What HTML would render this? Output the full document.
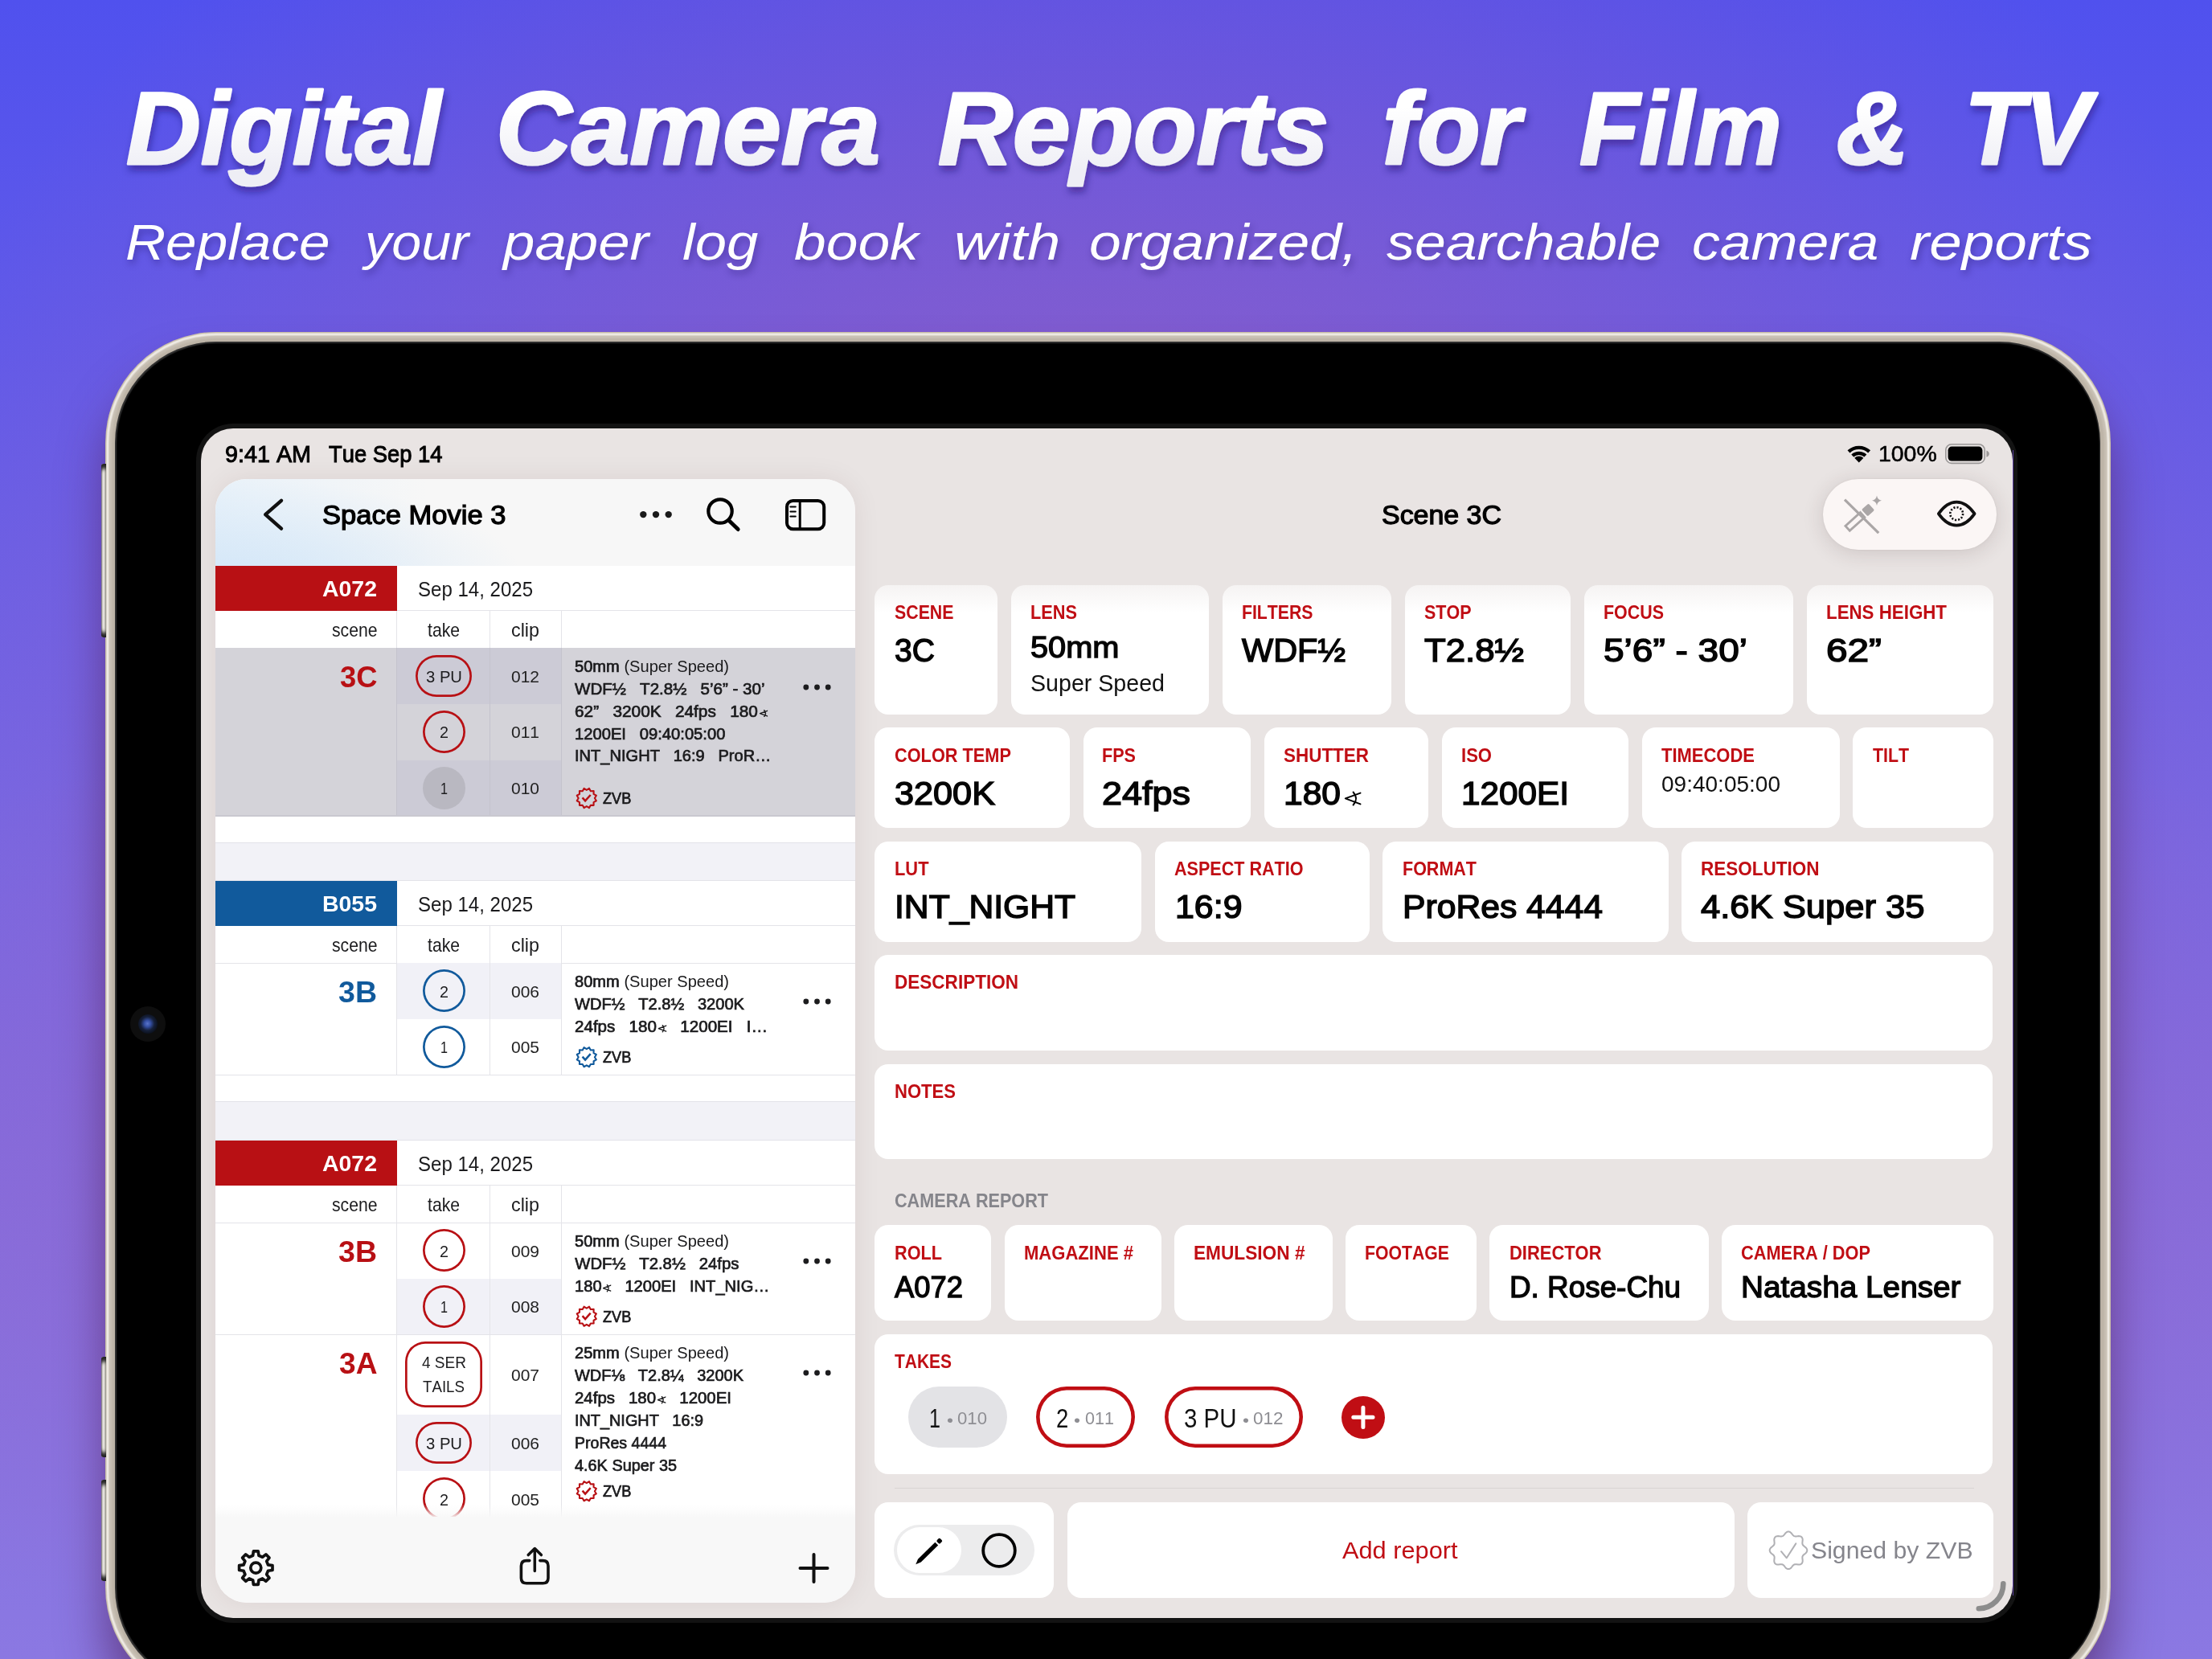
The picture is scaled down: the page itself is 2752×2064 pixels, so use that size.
<!DOCTYPE html>
<html><head><meta charset="utf-8"><title>Digital Camera Reports</title>
<style>
html,body{margin:0;padding:0}
body{width:2752px;height:2064px;overflow:hidden;position:relative;font-family:"Liberation Sans",sans-serif;font-kerning:none;
background:radial-gradient(ellipse 1500px 1150px at 50% 35%,rgba(165,95,180,.62) 0%,rgba(165,95,180,0) 100%),radial-gradient(ellipse 2200px 640px at 50% 72%,rgba(172,92,176,.45) 0%,rgba(172,92,176,0) 100%),linear-gradient(180deg,#5051EE 0%,#7866E1 49%,#8B78E2 100%);}
div,span,svg{position:absolute}
.t{display:block;white-space:pre;line-height:1;transform-origin:0 0}
.t i{font-style:normal;font-weight:400;-webkit-text-stroke:0}
.ang{position:static;display:inline-block;width:.53em;height:.455em;vertical-align:-.03em;margin-left:.07em}
.ttl{background:linear-gradient(180deg,#fff 30%,#ececf4 78%);-webkit-background-clip:text;background-clip:text;color:transparent;-webkit-text-fill-color:transparent;padding:0 .12em .25em .05em;margin:0 0 0 -.05em;filter:drop-shadow(2px 7px 7px rgba(25,15,90,.38))}
.sub{text-shadow:2px 5px 8px rgba(25,15,90,.35)}
.ov{left:0;top:0;pointer-events:none}
.tx{left:0;top:0;width:2752px;height:2064px;will-change:transform}
.dev{left:131px;top:413px;width:2494.5px;height:1700px;border-radius:138px;background:#c9bea8;box-shadow:0 46px 56px rgba(78,32,92,.62)}
.dev .a{left:.9px;top:.9px;right:.9px;bottom:.9px;border-radius:137px;background:#d9d3c8}
.dev .h{left:2px;top:2px;right:2px;bottom:2px;border-radius:136px;background:#f1ede7;filter:blur(.7px)}
.dev .b{left:4.6px;top:4.6px;right:4.6px;bottom:4.6px;border-radius:133.4px;background:#c9c1b5;box-shadow:0 0 1.5px 1px #d4cdc2}
.dev .b2{left:8px;top:8px;right:8px;bottom:8px;border-radius:130px;background:#bdb4a7;filter:blur(1.2px)}
.dev .c{left:12.3px;top:12.3px;right:12.3px;bottom:12.3px;border-radius:125.7px;background:#343434}
.dev .d{left:14.6px;top:14.6px;right:14.6px;bottom:14.6px;border-radius:123.4px;background:#000;box-shadow:0 0 1.6px 1px #000}
.btn{left:125.8px;width:6.4px;border-radius:3px 0 0 3px;background:linear-gradient(90deg,#8e8a84 0,#f0eeea 35%,#d8d4cd 70%,#a9a49b 100%);box-shadow:inset 0 9px 5px -3px #222,inset 0 -9px 5px -3px #222}
.ring{left:243.8px;top:526.8px;width:2266.4px;height:1492.4px;border-radius:46px;background:#131313}
.scr{left:249.6px;top:532.6px;width:2254.8px;height:1480.8px;border-radius:40px;background:#e9e4e3;overflow:hidden}
.sb{left:267.5px;top:596.2px;width:796.7px;height:1398px;border-radius:39px;overflow:hidden;background:#f7f7f8;box-shadow:0 0 34px rgba(70,30,30,.075)}
.sbh{left:0;top:0;width:797px;height:108px;background:radial-gradient(ellipse 360px 120px at 20px 120px,#d4e7f8 0%,rgba(212,231,248,.6) 42%,rgba(212,231,248,0) 100%),linear-gradient(90deg,rgba(228,240,250,.75) 0%,rgba(228,240,250,0) 33%),#f7f7f7}
</style></head>
<body>
<div class="dev"><div class="a"></div><div class="h"></div><div class="b"></div><div class="b2"></div><div class="c"></div><div class="d"></div></div>
<div class="btn" style="top:577px;height:216px"></div>
<div class="btn" style="top:1688px;height:125px"></div>
<div class="btn" style="top:1841px;height:126px"></div>
<div style="left:162.4px;top:1251.5px;width:44px;height:44px;border-radius:50%;background:#0e0e0e"></div>
<div style="left:172.4px;top:1261.5px;width:24px;height:24px;border-radius:50%;background:radial-gradient(circle at 48% 48%,#5a74c8 0,#3550a5 22%,#16203a 48%,#0a0f1a 75%,#0b0d12 100%)"></div>
<div class="ring"></div>
<div style="left:2503.6px;top:560px;width:1.6px;height:1425px;background:#5b3fa0"></div>
<div class="scr"></div>
<div style="left:1087.8px;top:728px;width:153.2px;height:161px;background:#fff;border-radius:17px;"></div><div style="left:1257.5px;top:728px;width:246.5px;height:161px;background:#fff;border-radius:17px;"></div><div style="left:1520.5px;top:728px;width:210.5px;height:161px;background:#fff;border-radius:17px;"></div><div style="left:1747.5px;top:728px;width:206.5px;height:161px;background:#fff;border-radius:17px;"></div><div style="left:1970.5px;top:728px;width:260.5px;height:161px;background:#fff;border-radius:17px;"></div><div style="left:2247.5px;top:728px;width:232px;height:161px;background:#fff;border-radius:17px;"></div><div style="left:1087.8px;top:905px;width:243.2px;height:125px;background:#fff;border-radius:17px;"></div><div style="left:1347.5px;top:905px;width:208.5px;height:125px;background:#fff;border-radius:17px;"></div><div style="left:1572.5px;top:905px;width:204.5px;height:125px;background:#fff;border-radius:17px;"></div><div style="left:1793.5px;top:905px;width:232.5px;height:125px;background:#fff;border-radius:17px;"></div><div style="left:2042.5px;top:905px;width:246px;height:125px;background:#fff;border-radius:17px;"></div><div style="left:2305px;top:905px;width:174.5px;height:125px;background:#fff;border-radius:17px;"></div><div style="left:1087.8px;top:1046.5px;width:332.7px;height:125px;background:#fff;border-radius:17px;"></div><div style="left:1436.5px;top:1046.5px;width:267px;height:125px;background:#fff;border-radius:17px;"></div><div style="left:1719.5px;top:1046.5px;width:356px;height:125px;background:#fff;border-radius:17px;"></div><div style="left:2091.5px;top:1046.5px;width:388px;height:125px;background:#fff;border-radius:17px;"></div><div style="left:1087.8px;top:1187.5px;width:1391.7px;height:119.5px;background:#fff;border-radius:17px;"></div><div style="left:1087.8px;top:1323.5px;width:1391.7px;height:118.5px;background:#fff;border-radius:17px;"></div><div style="left:1087.8px;top:1524.4px;width:145.7px;height:119px;background:#fff;border-radius:17px;"></div><div style="left:1249.5px;top:1524.4px;width:195px;height:119px;background:#fff;border-radius:17px;"></div><div style="left:1460.5px;top:1524.4px;width:197px;height:119px;background:#fff;border-radius:17px;"></div><div style="left:1673.5px;top:1524.4px;width:163px;height:119px;background:#fff;border-radius:17px;"></div><div style="left:1853px;top:1524.4px;width:272.5px;height:119px;background:#fff;border-radius:17px;"></div><div style="left:2141.5px;top:1524.4px;width:338px;height:119px;background:#fff;border-radius:17px;"></div><div style="left:1087.8px;top:1660px;width:1391.7px;height:174px;background:#fff;border-radius:17px;"></div><div style="left:1112.5px;top:1851px;width:1343.5px;height:1.4px;background:#d9d4d4;"></div><div style="left:1087.8px;top:1869px;width:223.2px;height:119px;background:#fff;border-radius:17px;"></div><div style="left:1327.5px;top:1869px;width:830px;height:119px;background:#fff;border-radius:17px;"></div><div style="left:2174px;top:1869px;width:306px;height:119px;background:#fff;border-radius:17px;"></div><div style="left:1130px;top:1725px;width:123.4px;height:75.8px;background:#e3e3e6;border-radius:38px;"></div><div style="left:1289.4px;top:1725px;width:122.9px;height:75.8px;box-shadow:inset 0 0 0 4.6px #C00E14;border-radius:38px;"></div><div style="left:1448.6px;top:1725px;width:172.8px;height:75.8px;box-shadow:inset 0 0 0 4.6px #C00E14;border-radius:38px;"></div><div style="left:1669px;top:1736.8px;width:53.8px;height:53px;background:#C00E14;border-radius:50%;"></div><div style="left:1112.4px;top:1897px;width:174.6px;height:63.4px;background:#ececed;border-radius:32px;"></div><div style="left:1115.8px;top:1900.4px;width:80px;height:56.2px;background:#fff;border-radius:29px;"></div><div style="left:1066px;top:684px;width:1438px;height:78px;background:linear-gradient(180deg,rgba(233,228,227,.75) 0%,rgba(233,228,227,.45) 55%,rgba(233,228,227,0) 100%);"></div><div style="left:2268px;top:596.4px;width:216.3px;height:87.6px;background:#fbf6f5;border-radius:44px;box-shadow:0 4px 26px rgba(60,40,40,.16),0 0 3px rgba(0,0,0,.06);"></div>
<div class="sb"><div class="sbh"></div>
<div style="left:0px;top:108px;width:797px;height:1186px;background:#fff;"></div><div style="left:0px;top:452px;width:797px;height:48px;background:#f2f2f7;border-top:1px solid #e3e3e9;border-bottom:1px solid #e3e3e9;box-sizing:border-box;"></div><div style="left:0px;top:774px;width:797px;height:49px;background:#f2f2f7;border-top:1px solid #e3e3e9;border-bottom:1px solid #e3e3e9;box-sizing:border-box;"></div><div style="left:0px;top:108px;width:226.2px;height:55.5px;background:#B81014;"></div><div style="left:226.2px;top:163px;width:570.8px;height:1px;background:#e4e4e9;"></div><div style="left:0px;top:209.5px;width:797px;height:1px;background:#e4e4e9;"></div><div style="left:0px;top:210px;width:797px;height:70px;background:#d4d3d9;"></div><div style="left:226.5px;top:210px;width:204.4px;height:70px;background:#cccbd6;"></div><div style="left:0px;top:280px;width:797px;height:69.5px;background:#d4d3d9;"></div><div style="left:0px;top:349.5px;width:797px;height:69.5px;background:#d4d3d9;"></div><div style="left:226.5px;top:349.5px;width:204.4px;height:69.5px;background:#cccbd6;"></div><div style="left:225.65px;top:164px;width:1.1px;height:255px;background:#e4e4e9;"></div><div style="left:341.25px;top:164px;width:1.1px;height:255px;background:#e4e4e9;"></div><div style="left:430.35px;top:164px;width:1.1px;height:255px;background:#e4e4e9;"></div><div style="left:225.65px;top:210px;width:1.1px;height:209px;background:#c4c3cd;"></div><div style="left:341.25px;top:210px;width:1.1px;height:209px;background:#c4c3cd;"></div><div style="left:430.35px;top:210px;width:1.1px;height:209px;background:#c4c3cd;"></div><div style="left:0px;top:418px;width:797px;height:1.6px;background:#c9c8d0;"></div><div style="left:0px;top:500px;width:226.2px;height:55.5px;background:#115A9C;"></div><div style="left:226.2px;top:555px;width:570.8px;height:1px;background:#e4e4e9;"></div><div style="left:0px;top:601.5px;width:797px;height:1px;background:#e4e4e9;"></div><div style="left:226.5px;top:602px;width:204.4px;height:69.5px;background:#f1f1f7;"></div><div style="left:0px;top:740.5px;width:797px;height:1px;background:#e4e4e9;"></div><div style="left:225.65px;top:556px;width:1.1px;height:185px;background:#e4e4e9;"></div><div style="left:341.25px;top:556px;width:1.1px;height:185px;background:#e4e4e9;"></div><div style="left:430.35px;top:556px;width:1.1px;height:185px;background:#e4e4e9;"></div><div style="left:0px;top:823px;width:226.2px;height:55.5px;background:#B81014;"></div><div style="left:226.2px;top:878px;width:570.8px;height:1px;background:#e4e4e9;"></div><div style="left:0px;top:924.5px;width:797px;height:1px;background:#e4e4e9;"></div><div style="left:226.5px;top:994.5px;width:204.4px;height:69.5px;background:#f1f1f7;"></div><div style="left:0px;top:1063.5px;width:797px;height:1px;background:#e4e4e9;"></div><div style="left:226.5px;top:1164px;width:204.4px;height:70px;background:#f1f1f7;"></div><div style="left:0px;top:1303.5px;width:797px;height:1px;background:#e4e4e9;"></div><div style="left:225.65px;top:879px;width:1.1px;height:425px;background:#e4e4e9;"></div><div style="left:341.25px;top:879px;width:1.1px;height:425px;background:#e4e4e9;"></div><div style="left:430.35px;top:879px;width:1.1px;height:425px;background:#e4e4e9;"></div><div style="left:249.75px;top:218.7px;width:69.5px;height:52.6px;border-radius:26.3px;box-sizing:border-box;box-shadow:inset 0 0 0 2.7px #B81014;"></div><div style="left:258px;top:288px;width:53px;height:53px;border-radius:26.5px;box-sizing:border-box;box-shadow:inset 0 0 0 2.7px #B81014;"></div><div style="left:258px;top:357.5px;width:53px;height:53px;border-radius:26.5px;box-sizing:border-box;background:#b9b8c1;"></div><div style="left:258px;top:610.3px;width:53px;height:53px;border-radius:26.5px;box-sizing:border-box;box-shadow:inset 0 0 0 2.7px #115A9C;"></div><div style="left:258px;top:679.8px;width:53px;height:53px;border-radius:26.5px;box-sizing:border-box;box-shadow:inset 0 0 0 2.7px #115A9C;"></div><div style="left:258px;top:933.3px;width:53px;height:53px;border-radius:26.5px;box-sizing:border-box;box-shadow:inset 0 0 0 2.7px #B81014;"></div><div style="left:258px;top:1002.8px;width:53px;height:53px;border-radius:26.5px;box-sizing:border-box;box-shadow:inset 0 0 0 2.7px #B81014;"></div><div style="left:236.25px;top:1073.25px;width:96.5px;height:81.5px;border-radius:25px;box-sizing:border-box;box-shadow:inset 0 0 0 2.7px #B81014;"></div><div style="left:249.75px;top:1172.7px;width:69.5px;height:52.6px;border-radius:26.3px;box-sizing:border-box;box-shadow:inset 0 0 0 2.7px #B81014;"></div><div style="left:258px;top:1242.3px;width:53px;height:53px;border-radius:26.5px;box-sizing:border-box;box-shadow:inset 0 0 0 2.7px #B81014;"></div><div style="left:0px;top:1276px;width:797px;height:15px;background:linear-gradient(180deg,rgba(248,248,248,0),rgba(248,248,248,.9));"></div><div style="left:0px;top:1290.7px;width:797px;height:108.3px;background:#f8f8f8;"></div>
</div>
<svg class="ov" width="2752" height="2064" viewBox="0 0 2752 2064"><path d="M2299.98 561.85 A18.8 18.8 0 0 1 2325.62 561.85" fill="none" stroke="#000" stroke-width="4.3"/><path d="M2304.75 566.97 A11.8 11.8 0 0 1 2320.85 566.97" fill="none" stroke="#000" stroke-width="4.3"/><path d="M2312.8 575.6 L2307.2000000000003 569.7 A8 8 0 0 1 2318.4 569.7 Z" fill="#000"/><rect x="2420.8" y="552.8" width="48.4" height="23.6" rx="7.2" fill="none" stroke="#9b9898" stroke-width="1.6"/><rect x="2423.6" y="555.6" width="42.8" height="18" rx="4.6" fill="#000"/><path d="M2471.4 560.6 Q2474.8 562 2474.8 564.7 Q2474.8 567.4 2471.4 568.8 Z" fill="#9b9898"/><path d="M350 622.8 L330.2 640.2 L350 657.6" fill="none" stroke="#111" stroke-width="4.4" stroke-linecap="round" stroke-linejoin="round"/><circle cx="800.3" cy="640.1" r="4.2" fill="#1a1a1a"/><circle cx="816.0" cy="640.1" r="4.2" fill="#1a1a1a"/><circle cx="831.7" cy="640.1" r="4.2" fill="#1a1a1a"/><circle cx="896" cy="636" r="14.7" fill="none" stroke="#000" stroke-width="4.2"/><path d="M906.8 647.6 L918.2 658.6" stroke="#000" stroke-width="4.8" stroke-linecap="round"/><rect x="979" y="623" width="46.2" height="35.2" rx="7.5" fill="none" stroke="#000" stroke-width="4"/><path d="M995.2 623 V658" stroke="#000" stroke-width="3"/><path d="M983.3 630.6 H989.8 M983.3 636.6 H989.8 M983.3 642.5 H989.8" stroke="#000" stroke-width="2" stroke-linecap="round"/><circle cx="1002.8" cy="855" r="3.4" fill="#1c1c1e"/><circle cx="1016.5" cy="855" r="3.4" fill="#1c1c1e"/><circle cx="1030.2" cy="855" r="3.4" fill="#1c1c1e"/><circle cx="1002.8" cy="1246" r="3.4" fill="#1c1c1e"/><circle cx="1016.5" cy="1246" r="3.4" fill="#1c1c1e"/><circle cx="1030.2" cy="1246" r="3.4" fill="#1c1c1e"/><circle cx="1002.8" cy="1569" r="3.4" fill="#1c1c1e"/><circle cx="1016.5" cy="1569" r="3.4" fill="#1c1c1e"/><circle cx="1030.2" cy="1569" r="3.4" fill="#1c1c1e"/><circle cx="1002.8" cy="1708" r="3.4" fill="#1c1c1e"/><circle cx="1016.5" cy="1708" r="3.4" fill="#1c1c1e"/><circle cx="1030.2" cy="1708" r="3.4" fill="#1c1c1e"/><path d="M733.04 980.93 L734.85 984.25 L738.64 984.16 L738.55 987.95 L741.87 989.76 L739.90 993.00 L741.87 996.24 L738.55 998.05 L738.64 1001.84 L734.85 1001.75 L733.04 1005.07 L729.80 1003.10 L726.56 1005.07 L724.75 1001.75 L720.96 1001.84 L721.05 998.05 L717.73 996.24 L719.70 993.00 L717.73 989.76 L721.05 987.95 L720.96 984.16 L724.75 984.25 L726.56 980.93 L729.80 982.90 Z" fill="none" stroke="#B81014" stroke-width="2.1" stroke-linejoin="round"/><path d="M724.60 992.40 L728.10 996.30 L734.70 989.00" fill="none" stroke="#B81014" stroke-width="2.52" stroke-linejoin="miter"/><path d="M733.04 1303.13 L734.85 1306.45 L738.64 1306.36 L738.55 1310.15 L741.87 1311.96 L739.90 1315.20 L741.87 1318.44 L738.55 1320.25 L738.64 1324.04 L734.85 1323.95 L733.04 1327.27 L729.80 1325.30 L726.56 1327.27 L724.75 1323.95 L720.96 1324.04 L721.05 1320.25 L717.73 1318.44 L719.70 1315.20 L717.73 1311.96 L721.05 1310.15 L720.96 1306.36 L724.75 1306.45 L726.56 1303.13 L729.80 1305.10 Z" fill="none" stroke="#115A9C" stroke-width="2.1" stroke-linejoin="round"/><path d="M724.60 1314.60 L728.10 1318.50 L734.70 1311.20" fill="none" stroke="#115A9C" stroke-width="2.52" stroke-linejoin="miter"/><path d="M733.04 1625.63 L734.85 1628.95 L738.64 1628.86 L738.55 1632.65 L741.87 1634.46 L739.90 1637.70 L741.87 1640.94 L738.55 1642.75 L738.64 1646.54 L734.85 1646.45 L733.04 1649.77 L729.80 1647.80 L726.56 1649.77 L724.75 1646.45 L720.96 1646.54 L721.05 1642.75 L717.73 1640.94 L719.70 1637.70 L717.73 1634.46 L721.05 1632.65 L720.96 1628.86 L724.75 1628.95 L726.56 1625.63 L729.80 1627.60 Z" fill="none" stroke="#B81014" stroke-width="2.1" stroke-linejoin="round"/><path d="M724.60 1637.10 L728.10 1641.00 L734.70 1633.70" fill="none" stroke="#B81014" stroke-width="2.52" stroke-linejoin="miter"/><path d="M733.04 1843.13 L734.85 1846.45 L738.64 1846.36 L738.55 1850.15 L741.87 1851.96 L739.90 1855.20 L741.87 1858.44 L738.55 1860.25 L738.64 1864.04 L734.85 1863.95 L733.04 1867.27 L729.80 1865.30 L726.56 1867.27 L724.75 1863.95 L720.96 1864.04 L721.05 1860.25 L717.73 1858.44 L719.70 1855.20 L717.73 1851.96 L721.05 1850.15 L720.96 1846.36 L724.75 1846.45 L726.56 1843.13 L729.80 1845.10 Z" fill="none" stroke="#B81014" stroke-width="2.1" stroke-linejoin="round"/><path d="M724.60 1854.60 L728.10 1858.50 L734.70 1851.20" fill="none" stroke="#B81014" stroke-width="2.52" stroke-linejoin="miter"/><path d="M2225.00 1905.50 L2225.91 1905.61 L2226.80 1905.95 L2227.64 1906.48 L2228.43 1907.16 L2229.14 1908.01 L2229.78 1908.88 L2230.41 1909.63 L2231.02 1910.28 L2231.64 1910.79 L2232.31 1911.15 L2233.04 1911.37 L2233.84 1911.44 L2234.73 1911.42 L2235.71 1911.33 L2236.78 1911.17 L2237.88 1911.07 L2238.92 1911.15 L2239.89 1911.37 L2240.75 1911.76 L2241.48 1912.32 L2242.04 1913.05 L2242.43 1913.91 L2242.65 1914.88 L2242.73 1915.92 L2242.63 1917.02 L2242.47 1918.09 L2242.38 1919.07 L2242.36 1919.96 L2242.43 1920.76 L2242.65 1921.49 L2243.01 1922.16 L2243.52 1922.78 L2244.17 1923.39 L2244.92 1924.02 L2245.79 1924.66 L2246.64 1925.37 L2247.32 1926.16 L2247.85 1927.00 L2248.19 1927.89 L2248.30 1928.80 L2248.19 1929.71 L2247.85 1930.60 L2247.32 1931.44 L2246.64 1932.23 L2245.79 1932.94 L2244.92 1933.58 L2244.17 1934.21 L2243.52 1934.82 L2243.01 1935.44 L2242.65 1936.11 L2242.43 1936.84 L2242.36 1937.64 L2242.38 1938.53 L2242.47 1939.51 L2242.63 1940.58 L2242.73 1941.68 L2242.65 1942.72 L2242.43 1943.69 L2242.04 1944.55 L2241.48 1945.28 L2240.75 1945.84 L2239.89 1946.23 L2238.92 1946.45 L2237.88 1946.53 L2236.78 1946.43 L2235.71 1946.27 L2234.73 1946.18 L2233.84 1946.16 L2233.04 1946.23 L2232.31 1946.45 L2231.64 1946.81 L2231.02 1947.32 L2230.41 1947.97 L2229.78 1948.72 L2229.14 1949.59 L2228.43 1950.44 L2227.64 1951.12 L2226.80 1951.65 L2225.91 1951.99 L2225.00 1952.10 L2224.09 1951.99 L2223.20 1951.65 L2222.36 1951.12 L2221.57 1950.44 L2220.86 1949.59 L2220.22 1948.72 L2219.59 1947.97 L2218.98 1947.32 L2218.36 1946.81 L2217.69 1946.45 L2216.96 1946.23 L2216.16 1946.16 L2215.27 1946.18 L2214.29 1946.27 L2213.22 1946.43 L2212.12 1946.53 L2211.08 1946.45 L2210.11 1946.23 L2209.25 1945.84 L2208.52 1945.28 L2207.96 1944.55 L2207.57 1943.69 L2207.35 1942.72 L2207.27 1941.68 L2207.37 1940.58 L2207.53 1939.51 L2207.62 1938.53 L2207.64 1937.64 L2207.57 1936.84 L2207.35 1936.11 L2206.99 1935.44 L2206.48 1934.82 L2205.83 1934.21 L2205.08 1933.58 L2204.21 1932.94 L2203.36 1932.23 L2202.68 1931.44 L2202.15 1930.60 L2201.81 1929.71 L2201.70 1928.80 L2201.81 1927.89 L2202.15 1927.00 L2202.68 1926.16 L2203.36 1925.37 L2204.21 1924.66 L2205.08 1924.02 L2205.83 1923.39 L2206.48 1922.78 L2206.99 1922.16 L2207.35 1921.49 L2207.57 1920.76 L2207.64 1919.96 L2207.62 1919.07 L2207.53 1918.09 L2207.37 1917.02 L2207.27 1915.92 L2207.35 1914.88 L2207.57 1913.91 L2207.96 1913.05 L2208.52 1912.32 L2209.25 1911.76 L2210.11 1911.37 L2211.08 1911.15 L2212.12 1911.07 L2213.22 1911.17 L2214.29 1911.33 L2215.27 1911.42 L2216.16 1911.44 L2216.96 1911.37 L2217.69 1911.15 L2218.36 1910.79 L2218.98 1910.28 L2219.59 1909.63 L2220.22 1908.88 L2220.86 1908.01 L2221.57 1907.16 L2222.36 1906.48 L2223.20 1905.95 L2224.09 1905.61 Z" fill="none" stroke="#b0b0b4" stroke-width="2.0" stroke-linejoin="round"/><path d="M2216.00 1930.20 L2222.80 1938.30 L2234.30 1920.40" fill="none" stroke="#b0b0b4" stroke-width="2.0" stroke-linecap="round" stroke-linejoin="round"/><path d="M314.63 1935.33 L315.36 1929.91 L321.24 1929.91 L321.97 1935.33 L326.50 1937.21 L330.85 1933.89 L335.01 1938.05 L331.69 1942.40 L333.57 1946.93 L338.99 1947.66 L338.99 1953.54 L333.57 1954.27 L331.69 1958.80 L335.01 1963.15 L330.85 1967.31 L326.50 1963.99 L321.97 1965.87 L321.24 1971.29 L315.36 1971.29 L314.63 1965.87 L310.10 1963.99 L305.75 1967.31 L301.59 1963.15 L304.91 1958.80 L303.03 1954.27 L297.61 1953.54 L297.61 1947.66 L303.03 1946.93 L304.91 1942.40 L301.59 1938.05 L305.75 1933.89 L310.10 1937.21 Z" fill="none" stroke="#111" stroke-width="3.7" stroke-linejoin="round"/><circle cx="318.3" cy="1950.6" r="6.5" fill="none" stroke="#111" stroke-width="3.7"/><path d="M658.8 1941.6 H655 Q648.4 1941.6 648.4 1948.2 V1963.2 Q648.4 1969.8 655 1969.8 H675.4 Q682 1969.8 682 1963.2 V1948.2 Q682 1941.6 675.4 1941.6 H671.8" fill="none" stroke="#111" stroke-width="3.6" stroke-linecap="round"/><path d="M665.3 1954.6 V1927.2 M657.2 1934.6 L665.3 1926.5 L673.4 1934.6" fill="none" stroke="#111" stroke-width="3.5" stroke-linecap="round" stroke-linejoin="round"/><path d="M995.5 1951 H1029.5 M1012.5 1934 V1968" stroke="#111" stroke-width="4" stroke-linecap="round"/><path d="M2295 621.7 L2337.2 663.2" stroke="#aaa6a6" stroke-width="3.2"/><g transform="translate(2298.6 657.3) rotate(-42)"><rect x="0" y="-4" width="25" height="8" fill="none" stroke="#aaa6a6" stroke-width="2.8"/><rect x="28.5" y="-5.6" width="11.5" height="11.2" rx="1.5" fill="#aaa6a6"/></g><path d="M2335 616.6 Q2335.9 622 2341 622.8 Q2335.9 623.6 2335 629 Q2334.1 623.6 2329 622.8 Q2334.1 622 2335 616.6 Z" fill="#aaa6a6"/><path d="M2411.8 639.1 Q2422 624.6 2434.2 624.6 Q2446.4 624.6 2456.6 639.1 Q2446.4 653.6 2434.2 653.6 Q2422 653.6 2411.8 639.1 Z" fill="none" stroke="#111" stroke-width="3.7" stroke-linejoin="round"/><circle cx="2434.2" cy="639.1" r="7.9" fill="none" stroke="#111" stroke-width="2.6" stroke-dasharray="2.1 2.04"/><path d="M1692.5 986.6 L1673.8 993.4 L1692.5 1000.4 M1683.6 985.5 Q1690.6 993.6 1683.6 1001.5" fill="none" stroke="#000" stroke-width="2" stroke-linecap="round" stroke-linejoin="round"/><path d="M1683.8 1763.3 H1708 M1695.9 1751.2 V1775.4" stroke="#fff" stroke-width="5" stroke-linecap="round"/><g transform="translate(1139.3 1946.2) rotate(-44.6)"><path d="M0 0 L6.5 -2.7 H36.5 V2.7 H6.5 Z" fill="#000"/><rect x="38.6" y="-2.9" width="5.6" height="5.8" rx="1.6" fill="#000"/></g><circle cx="1243" cy="1929" r="19.8" fill="none" stroke="#000" stroke-width="3.8"/><path d="M2492.3 1970.4 A30.8 30.8 0 0 1 2461.8 2001.2" fill="none" stroke="#8c8c8c" stroke-width="6.6" stroke-linecap="round"/></svg>
<div class="tx">
<svg class="ov" width="2752" height="420" viewBox="0 0 2752 420"><defs><linearGradient id="tg" gradientUnits="userSpaceOnUse" x1="0" y1="-70" x2="0" y2="8"><stop offset="0" stop-color="#fff"/><stop offset="1" stop-color="#eeeef5"/></linearGradient><filter id="ts" x="-2%" y="-10%" width="104%" height="130%"><feDropShadow dx="2" dy="7" stdDeviation="4" flood-color="#190f5a" flood-opacity=".4"/></filter></defs><g filter="url(#ts)" font-family="Liberation Sans" font-weight="700" font-style="italic" font-size="128.5" fill="url(#tg)" stroke="url(#tg)" stroke-width="3" stroke-linejoin="round" style="font-kerning:none"><text transform="translate(157.01 204) scale(0.9984 1)">Digital</text><text transform="translate(616.91 204) scale(1.0142 1)">Camera</text><text transform="translate(1166.99 204) scale(1.0011 1)">Reports</text><text transform="translate(1720.07 204) scale(1.0016 1)">for</text><text transform="translate(1964.98 204) scale(0.9526 1)">Film</text><text transform="translate(2284.78 204) scale(0.9686 1)">&amp;</text><text transform="translate(2444.10 204) scale(0.9564 1)">TV</text></g></svg>
<span class="t sub" style="left:155.7px;top:269.7px;font-size:63px;color:#fff;font-style:italic;transform:scaleX(1.1010);">Replace</span>
<span class="t sub" style="left:453.9px;top:269.7px;font-size:63px;color:#fff;font-style:italic;transform:scaleX(1.0545);">your</span>
<span class="t sub" style="left:626.0px;top:269.7px;font-size:63px;color:#fff;font-style:italic;transform:scaleX(1.1242);">paper</span>
<span class="t sub" style="left:849.0px;top:269.7px;font-size:63px;color:#fff;font-style:italic;transform:scaleX(1.1212);">log</span>
<span class="t sub" style="left:988.0px;top:269.7px;font-size:63px;color:#fff;font-style:italic;transform:scaleX(1.1331);">book</span>
<span class="t sub" style="left:1186.8px;top:269.7px;font-size:63px;color:#fff;font-style:italic;transform:scaleX(1.1805);">with</span>
<span class="t sub" style="left:1355.4px;top:269.7px;font-size:63px;color:#fff;font-style:italic;transform:scaleX(1.1349);">organized,</span>
<span class="t sub" style="left:1724.8px;top:269.7px;font-size:63px;color:#fff;font-style:italic;transform:scaleX(1.1078);">searchable</span>
<span class="t sub" style="left:2104.9px;top:269.7px;font-size:63px;color:#fff;font-style:italic;transform:scaleX(1.1051);">camera</span>
<span class="t sub" style="left:2376.3px;top:269.7px;font-size:63px;color:#fff;font-style:italic;transform:scaleX(1.1571);">reports</span>
<span class="t" style="left:280.0px;top:549.6px;font-size:30px;color:#000;-webkit-text-stroke:1.0px;transform:scaleX(0.9576);">9:41 AM</span>
<span class="t" style="left:408.5px;top:549.6px;font-size:30px;color:#000;-webkit-text-stroke:1.0px;transform:scaleX(0.9122);">Tue Sep 14</span>
<span class="t" style="left:2337.0px;top:550.8px;font-size:28px;color:#000;-webkit-text-stroke:0.55px;transform:scaleX(1.0150);">100%</span>
<span class="t" style="left:400.6px;top:623.6px;font-size:33px;color:#000;-webkit-text-stroke:1.25px;transform:scaleX(1.0463);">Space Movie 3</span>
<span class="t" style="left:1719.0px;top:624.1px;font-size:33px;color:#000;-webkit-text-stroke:1.25px;transform:scaleX(1.0280);">Scene 3C</span>
<span class="t" style="left:401.0px;top:719.2px;font-size:27.7px;color:#fff;font-weight:700;transform:scaleX(1.0271);">A072</span>
<span class="t" style="left:520.0px;top:720.7px;font-size:25.8px;color:#1b1b1d;transform:scaleX(0.9317);">Sep 14, 2025</span>
<span class="t" style="left:412.5px;top:772.2px;font-size:24px;color:#1b1b1d;transform:scaleX(0.8822);">scene</span>
<span class="t" style="left:531.5px;top:772.2px;font-size:24px;color:#1b1b1d;transform:scaleX(0.8815);">take</span>
<span class="t" style="left:635.5px;top:772.2px;font-size:24px;color:#1b1b1d;transform:scaleX(0.9718);">clip</span>
<span class="t" style="left:401.0px;top:1111.2px;font-size:27.7px;color:#fff;font-weight:700;transform:scaleX(1.0271);">B055</span>
<span class="t" style="left:520.0px;top:1112.7px;font-size:25.8px;color:#1b1b1d;transform:scaleX(0.9317);">Sep 14, 2025</span>
<span class="t" style="left:412.5px;top:1164.2px;font-size:24px;color:#1b1b1d;transform:scaleX(0.8822);">scene</span>
<span class="t" style="left:531.5px;top:1164.2px;font-size:24px;color:#1b1b1d;transform:scaleX(0.8815);">take</span>
<span class="t" style="left:635.5px;top:1164.2px;font-size:24px;color:#1b1b1d;transform:scaleX(0.9718);">clip</span>
<span class="t" style="left:401.0px;top:1434.2px;font-size:27.7px;color:#fff;font-weight:700;transform:scaleX(1.0271);">A072</span>
<span class="t" style="left:520.0px;top:1435.7px;font-size:25.8px;color:#1b1b1d;transform:scaleX(0.9317);">Sep 14, 2025</span>
<span class="t" style="left:412.5px;top:1487.2px;font-size:24px;color:#1b1b1d;transform:scaleX(0.8822);">scene</span>
<span class="t" style="left:531.5px;top:1487.2px;font-size:24px;color:#1b1b1d;transform:scaleX(0.8815);">take</span>
<span class="t" style="left:635.5px;top:1487.2px;font-size:24px;color:#1b1b1d;transform:scaleX(0.9718);">clip</span>
<span class="t" style="left:422.5px;top:824.1px;font-size:37.7px;color:#B81014;font-weight:700;transform:scaleX(0.9650);">3C</span>
<span class="t" style="left:421.0px;top:1216.1px;font-size:37.7px;color:#115A9C;font-weight:700;transform:scaleX(0.9961);">3B</span>
<span class="t" style="left:421.0px;top:1539.1px;font-size:37.7px;color:#B81014;font-weight:700;transform:scaleX(0.9961);">3B</span>
<span class="t" style="left:421.5px;top:1678.1px;font-size:37.7px;color:#B81014;font-weight:700;transform:scaleX(0.9857);">3A</span>
<span class="t" style="left:635.5px;top:831.8px;font-size:20.6px;color:#222;transform:scaleX(1.0182);">012</span>
<span class="t" style="left:635.5px;top:901.3px;font-size:20.6px;color:#222;transform:scaleX(1.0182);">011</span>
<span class="t" style="left:635.5px;top:970.8px;font-size:20.6px;color:#222;transform:scaleX(1.0182);">010</span>
<span class="t" style="left:635.5px;top:1223.6px;font-size:20.6px;color:#222;transform:scaleX(1.0182);">006</span>
<span class="t" style="left:635.5px;top:1293.1px;font-size:20.6px;color:#222;transform:scaleX(1.0182);">005</span>
<span class="t" style="left:635.5px;top:1546.6px;font-size:20.6px;color:#222;transform:scaleX(1.0182);">009</span>
<span class="t" style="left:635.5px;top:1616.1px;font-size:20.6px;color:#222;transform:scaleX(1.0182);">008</span>
<span class="t" style="left:635.5px;top:1700.8px;font-size:20.6px;color:#222;transform:scaleX(1.0182);">007</span>
<span class="t" style="left:635.5px;top:1785.8px;font-size:20.6px;color:#222;transform:scaleX(1.0182);">006</span>
<span class="t" style="left:635.5px;top:1855.6px;font-size:20.6px;color:#222;transform:scaleX(1.0182);">005</span>
<span class="t" style="left:529.5px;top:831.8px;font-size:20.6px;color:#1c1c1e;transform:scaleX(0.9826);">3 PU</span>
<span class="t" style="left:546.5px;top:901.3px;font-size:20.6px;color:#1c1c1e;transform:scaleX(0.9591);">2</span>
<span class="t" style="left:547.5px;top:970.8px;font-size:20.6px;color:#1c1c1e;transform:scaleX(0.7847);">1</span>
<span class="t" style="left:546.5px;top:1223.6px;font-size:20.6px;color:#1c1c1e;transform:scaleX(0.9591);">2</span>
<span class="t" style="left:547.5px;top:1293.1px;font-size:20.6px;color:#1c1c1e;transform:scaleX(0.7847);">1</span>
<span class="t" style="left:546.5px;top:1546.6px;font-size:20.6px;color:#1c1c1e;transform:scaleX(0.9591);">2</span>
<span class="t" style="left:547.5px;top:1616.1px;font-size:20.6px;color:#1c1c1e;transform:scaleX(0.7847);">1</span>
<span class="t" style="left:524.5px;top:1685.3px;font-size:20.6px;color:#1c1c1e;transform:scaleX(0.9239);">4 SER</span>
<span class="t" style="left:526.0px;top:1715.3px;font-size:20.6px;color:#1c1c1e;transform:scaleX(0.9085);">TAILS</span>
<span class="t" style="left:529.5px;top:1785.8px;font-size:20.6px;color:#1c1c1e;transform:scaleX(0.9826);">3 PU</span>
<span class="t" style="left:546.5px;top:1855.6px;font-size:20.6px;color:#1c1c1e;transform:scaleX(0.9591);">2</span>
<span class="t" style="left:715.3px;top:818.8px;font-size:20.3px;color:#1a1a1c;-webkit-text-stroke:0.7px;transform:scaleX(0.9902);">50mm <i>(Super Speed)</i></span>
<span class="t" style="left:715.3px;top:846.7px;font-size:20.3px;color:#1a1a1c;-webkit-text-stroke:0.7px;transform:scaleX(1.0137);">WDF½   T2.8½   5’6” - 30’</span>
<span class="t" style="left:715.3px;top:874.6px;font-size:20.3px;color:#1a1a1c;-webkit-text-stroke:0.7px;transform:scaleX(1.0261);">62”   3200K   24fps   180<svg class="ang" viewBox="0 0 21 18"><path d="M20 2 L1.3 8.9 L20 15.9 M11.1 1 Q18.1 9 11.1 17" fill="none" stroke="currentColor" stroke-width="2.5" stroke-linecap="round" stroke-linejoin="round"/></svg></span>
<span class="t" style="left:715.3px;top:902.5px;font-size:20.3px;color:#1a1a1c;-webkit-text-stroke:0.7px;transform:scaleX(0.9951);">1200EI   09:40:05:00</span>
<span class="t" style="left:715.3px;top:930.4px;font-size:20.3px;color:#1a1a1c;-webkit-text-stroke:0.7px;transform:scaleX(0.9898);">INT_NIGHT   16:9   ProR…</span>
<span class="t" style="left:749.6px;top:983.4px;font-size:20.3px;color:#1a1a1c;-webkit-text-stroke:0.7px;transform:scaleX(0.8973);">ZVB</span>
<span class="t" style="left:715.3px;top:1211.3px;font-size:20.3px;color:#1a1a1c;-webkit-text-stroke:0.7px;transform:scaleX(0.9902);">80mm <i>(Super Speed)</i></span>
<span class="t" style="left:715.3px;top:1239.2px;font-size:20.3px;color:#1a1a1c;-webkit-text-stroke:0.7px;transform:scaleX(0.9904);">WDF½   T2.8½   3200K</span>
<span class="t" style="left:715.3px;top:1267.1px;font-size:20.3px;color:#1a1a1c;-webkit-text-stroke:0.7px;transform:scaleX(1.0147);">24fps   180<svg class="ang" viewBox="0 0 21 18"><path d="M20 2 L1.3 8.9 L20 15.9 M11.1 1 Q18.1 9 11.1 17" fill="none" stroke="currentColor" stroke-width="2.5" stroke-linecap="round" stroke-linejoin="round"/></svg>   1200EI   I…</span>
<span class="t" style="left:749.6px;top:1305.3px;font-size:20.3px;color:#1a1a1c;-webkit-text-stroke:0.7px;transform:scaleX(0.8973);">ZVB</span>
<span class="t" style="left:715.3px;top:1534.3px;font-size:20.3px;color:#1a1a1c;-webkit-text-stroke:0.7px;transform:scaleX(0.9902);">50mm <i>(Super Speed)</i></span>
<span class="t" style="left:715.3px;top:1562.2px;font-size:20.3px;color:#1a1a1c;-webkit-text-stroke:0.7px;">WDF½   T2.8½   24fps</span>
<span class="t" style="left:715.3px;top:1590.1px;font-size:20.3px;color:#1a1a1c;-webkit-text-stroke:0.7px;transform:scaleX(0.9923);">180<svg class="ang" viewBox="0 0 21 18"><path d="M20 2 L1.3 8.9 L20 15.9 M11.1 1 Q18.1 9 11.1 17" fill="none" stroke="currentColor" stroke-width="2.5" stroke-linecap="round" stroke-linejoin="round"/></svg>   1200EI   INT_NIG…</span>
<span class="t" style="left:749.6px;top:1628.1px;font-size:20.3px;color:#1a1a1c;-webkit-text-stroke:0.7px;transform:scaleX(0.8973);">ZVB</span>
<span class="t" style="left:715.3px;top:1673.3px;font-size:20.3px;color:#1a1a1c;-webkit-text-stroke:0.7px;transform:scaleX(0.9902);">25mm <i>(Super Speed)</i></span>
<span class="t" style="left:715.3px;top:1701.2px;font-size:20.3px;color:#1a1a1c;-webkit-text-stroke:0.7px;transform:scaleX(0.9857);">WDF⅛   T2.8¼   3200K</span>
<span class="t" style="left:715.3px;top:1729.1px;font-size:20.3px;color:#1a1a1c;-webkit-text-stroke:0.7px;transform:scaleX(1.0067);">24fps   180<svg class="ang" viewBox="0 0 21 18"><path d="M20 2 L1.3 8.9 L20 15.9 M11.1 1 Q18.1 9 11.1 17" fill="none" stroke="currentColor" stroke-width="2.5" stroke-linecap="round" stroke-linejoin="round"/></svg>   1200EI</span>
<span class="t" style="left:715.3px;top:1757.0px;font-size:20.3px;color:#1a1a1c;-webkit-text-stroke:0.7px;transform:scaleX(0.9791);">INT_NIGHT   16:9</span>
<span class="t" style="left:715.3px;top:1784.9px;font-size:20.3px;color:#1a1a1c;-webkit-text-stroke:0.7px;transform:scaleX(0.9629);">ProRes 4444</span>
<span class="t" style="left:715.3px;top:1812.8px;font-size:20.3px;color:#1a1a1c;-webkit-text-stroke:0.7px;transform:scaleX(0.9794);">4.6K Super 35</span>
<span class="t" style="left:749.6px;top:1845.3px;font-size:20.3px;color:#1a1a1c;-webkit-text-stroke:0.7px;transform:scaleX(0.8973);">ZVB</span>
<span class="t" style="left:1112.5px;top:751.3px;font-size:23px;color:#C00E14;font-weight:700;transform:scaleX(0.9274);">SCENE</span>
<span class="t" style="left:1282.0px;top:751.3px;font-size:23px;color:#C00E14;font-weight:700;transform:scaleX(0.9455);">LENS</span>
<span class="t" style="left:1545.0px;top:751.3px;font-size:23px;color:#C00E14;font-weight:700;transform:scaleX(0.9234);">FILTERS</span>
<span class="t" style="left:1772.0px;top:751.3px;font-size:23px;color:#C00E14;font-weight:700;transform:scaleX(0.9341);">STOP</span>
<span class="t" style="left:1995.0px;top:751.3px;font-size:23px;color:#C00E14;font-weight:700;transform:scaleX(0.9317);">FOCUS</span>
<span class="t" style="left:2272.0px;top:751.3px;font-size:23px;color:#C00E14;font-weight:700;transform:scaleX(0.9701);">LENS HEIGHT</span>
<span class="t" style="left:1112.5px;top:789.1px;font-size:40.6px;color:#050505;-webkit-text-stroke:1.46px;transform:scaleX(0.9639);">3C</span>
<span class="t" style="left:1282.0px;top:787.2px;font-size:37px;color:#050505;-webkit-text-stroke:1.33px;transform:scaleX(1.0748);">50mm</span>
<span class="t" style="left:1282.0px;top:835.0px;font-size:29.5px;color:#111;transform:scaleX(0.9697);">Super Speed</span>
<span class="t" style="left:1545.0px;top:789.1px;font-size:40.6px;color:#050505;-webkit-text-stroke:1.46px;transform:scaleX(1.0219);">WDF½</span>
<span class="t" style="left:1772.0px;top:789.1px;font-size:40.6px;color:#050505;-webkit-text-stroke:1.46px;transform:scaleX(1.0778);">T2.8½</span>
<span class="t" style="left:1995.0px;top:789.1px;font-size:40.6px;color:#050505;-webkit-text-stroke:1.46px;transform:scaleX(1.1338);">5’6” - 30’</span>
<span class="t" style="left:2272.0px;top:789.1px;font-size:40.6px;color:#050505;-webkit-text-stroke:1.46px;transform:scaleX(1.1763);">62”</span>
<span class="t" style="left:1112.5px;top:928.8px;font-size:23px;color:#C00E14;font-weight:700;transform:scaleX(0.9456);">COLOR TEMP</span>
<span class="t" style="left:1371.0px;top:928.8px;font-size:23px;color:#C00E14;font-weight:700;transform:scaleX(0.9389);">FPS</span>
<span class="t" style="left:1596.5px;top:928.8px;font-size:23px;color:#C00E14;font-weight:700;transform:scaleX(0.9758);">SHUTTER</span>
<span class="t" style="left:1818.0px;top:928.8px;font-size:23px;color:#C00E14;font-weight:700;transform:scaleX(0.9590);">ISO</span>
<span class="t" style="left:2067.0px;top:928.8px;font-size:23px;color:#C00E14;font-weight:700;transform:scaleX(0.9556);">TIMECODE</span>
<span class="t" style="left:2329.5px;top:928.8px;font-size:23px;color:#C00E14;font-weight:700;transform:scaleX(0.9269);">TILT</span>
<span class="t" style="left:1112.5px;top:966.6px;font-size:40.6px;color:#050505;-webkit-text-stroke:1.46px;transform:scaleX(1.0652);">3200K</span>
<span class="t" style="left:1371.0px;top:966.6px;font-size:40.6px;color:#050505;-webkit-text-stroke:1.46px;transform:scaleX(1.1080);">24fps</span>
<span class="t" style="left:1596.5px;top:966.6px;font-size:40.6px;color:#050505;-webkit-text-stroke:1.46px;transform:scaleX(1.0487);">180</span>
<span class="t" style="left:1818.0px;top:966.6px;font-size:40.6px;color:#050505;-webkit-text-stroke:1.46px;transform:scaleX(1.0418);">1200EI</span>
<span class="t" style="left:2067.0px;top:961.5px;font-size:27.7px;color:#111;transform:scaleX(1.0119);">09:40:05:00</span>
<span class="t" style="left:1112.5px;top:1070.3px;font-size:23px;color:#C00E14;font-weight:700;transform:scaleX(0.9504);">LUT</span>
<span class="t" style="left:1460.5px;top:1070.3px;font-size:23px;color:#C00E14;font-weight:700;transform:scaleX(0.9373);">ASPECT RATIO</span>
<span class="t" style="left:1744.5px;top:1070.3px;font-size:23px;color:#C00E14;font-weight:700;transform:scaleX(0.9352);">FORMAT</span>
<span class="t" style="left:2116.0px;top:1070.3px;font-size:23px;color:#C00E14;font-weight:700;transform:scaleX(0.9782);">RESOLUTION</span>
<span class="t" style="left:1112.5px;top:1108.1px;font-size:40.6px;color:#050505;-webkit-text-stroke:1.46px;transform:scaleX(1.0506);">INT_NIGHT</span>
<span class="t" style="left:1461.5px;top:1108.1px;font-size:40.6px;color:#050505;-webkit-text-stroke:1.46px;transform:scaleX(1.0572);">16:9</span>
<span class="t" style="left:1744.5px;top:1108.1px;font-size:40.6px;color:#050505;-webkit-text-stroke:1.46px;transform:scaleX(1.0513);">ProRes 4444</span>
<span class="t" style="left:2116.0px;top:1108.1px;font-size:40.6px;color:#050505;-webkit-text-stroke:1.46px;transform:scaleX(1.0734);">4.6K Super 35</span>
<span class="t" style="left:1112.5px;top:1211.3px;font-size:23px;color:#C00E14;font-weight:700;transform:scaleX(0.9797);">DESCRIPTION</span>
<span class="t" style="left:1112.5px;top:1346.8px;font-size:23px;color:#C00E14;font-weight:700;transform:scaleX(0.9592);">NOTES</span>
<span class="t" style="left:1112.5px;top:1482.8px;font-size:23px;color:#85858b;font-weight:700;transform:scaleX(0.9401);">CAMERA REPORT</span>
<span class="t" style="left:1112.5px;top:1547.8px;font-size:23px;color:#C00E14;font-weight:700;transform:scaleX(0.9424);">ROLL</span>
<span class="t" style="left:1274.0px;top:1547.8px;font-size:23px;color:#C00E14;font-weight:700;transform:scaleX(0.9588);">MAGAZINE #</span>
<span class="t" style="left:1485.0px;top:1547.8px;font-size:23px;color:#C00E14;font-weight:700;transform:scaleX(0.9852);">EMULSION #</span>
<span class="t" style="left:1698.0px;top:1547.8px;font-size:23px;color:#C00E14;font-weight:700;transform:scaleX(0.9232);">FOOTAGE</span>
<span class="t" style="left:1877.5px;top:1547.8px;font-size:23px;color:#C00E14;font-weight:700;transform:scaleX(0.9532);">DIRECTOR</span>
<span class="t" style="left:2166.0px;top:1547.8px;font-size:23px;color:#C00E14;font-weight:700;transform:scaleX(0.9473);">CAMERA / DOP</span>
<span class="t" style="left:1112.5px;top:1582.7px;font-size:37px;color:#050505;-webkit-text-stroke:1.33px;transform:scaleX(0.9835);">A072</span>
<span class="t" style="left:1878.0px;top:1582.7px;font-size:37px;color:#050505;-webkit-text-stroke:1.33px;transform:scaleX(0.9960);">D. Rose-Chu</span>
<span class="t" style="left:2166.0px;top:1582.7px;font-size:37px;color:#050505;-webkit-text-stroke:1.33px;transform:scaleX(1.0470);">Natasha Lenser</span>
<span class="t" style="left:1113.0px;top:1682.8px;font-size:23px;color:#C00E14;font-weight:700;transform:scaleX(0.9108);">TAKES</span>
<span class="t" style="left:1156.0px;top:1747.9px;font-size:33.2px;color:#111;transform:scaleX(0.7580);">1</span>
<span class="t" style="left:1177.6px;top:1755.7px;font-size:21px;color:#8e8e93;transform:scaleX(1.0870);">•</span>
<span class="t" style="left:1191.0px;top:1754.4px;font-size:22px;color:#8e8e93;transform:scaleX(1.0077);">010</span>
<span class="t" style="left:1314.0px;top:1747.9px;font-size:33.2px;color:#111;transform:scaleX(0.8284);">2</span>
<span class="t" style="left:1336.4px;top:1755.7px;font-size:21px;color:#8e8e93;transform:scaleX(1.0870);">•</span>
<span class="t" style="left:1350.0px;top:1754.4px;font-size:22px;color:#8e8e93;transform:scaleX(0.9804);">011</span>
<span class="t" style="left:1473.0px;top:1747.9px;font-size:33.2px;color:#111;transform:scaleX(0.8878);">3 PU</span>
<span class="t" style="left:1545.6px;top:1755.7px;font-size:21px;color:#8e8e93;transform:scaleX(1.0870);">•</span>
<span class="t" style="left:1559.3px;top:1754.4px;font-size:22px;color:#8e8e93;transform:scaleX(1.0213);">012</span>
<span class="t" style="left:1670.0px;top:1914.0px;font-size:29.5px;color:#C00E14;transform:scaleX(1.0417);">Add report</span>
<span class="t" style="left:2253.4px;top:1914.7px;font-size:29px;color:#85858c;transform:scaleX(1.0421);">Signed by ZVB</span>
</div>
</body></html>
